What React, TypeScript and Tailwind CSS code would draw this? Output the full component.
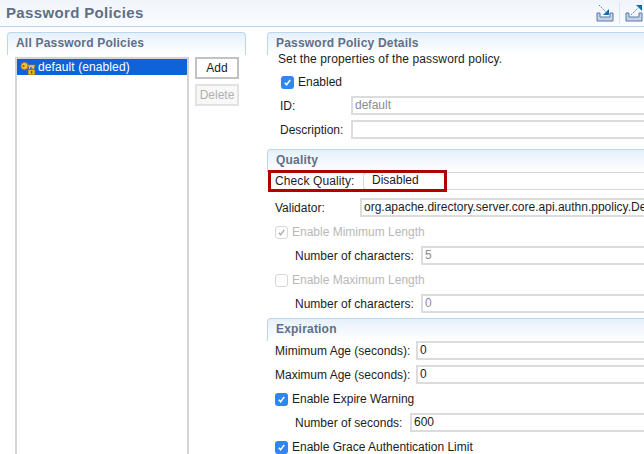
import React from 'react';

const font = { fontFamily: '"Liberation Sans", Arial, sans-serif' };

const SectionHead = ({ title }: { title: string }) => (
  <div className="h-[23px] shrink-0 pl-2 pt-[3px] rounded-t-[4px] border-t border-l border-r border-[#b9d7f0] border-b-0 bg-gradient-to-b from-[#e6f0fa] to-white text-[12px] leading-[14px] font-bold text-[#5f6f85] tracking-[0.2px]">
    {title}
  </div>
);

const Check = ({ state }: { state: 'on' | 'off' | 'dim' }) => {
  if (state === 'on') {
    return (
      <span className="w-[13px] h-[13px] rounded-[3px] bg-[#2f86f0] flex items-center justify-center shrink-0">
        <svg width="9" height="9" viewBox="0 0 9 9"><path d="M1.8 4.8 L3.6 6.8 L7.2 2" stroke="#fff" strokeWidth="1.5" fill="none" /></svg>
      </span>
    );
  }
  return (
    <span className="w-[13px] h-[13px] rounded-[3px] border border-[#d6d6d6] bg-white flex items-center justify-center shrink-0">
      {state === 'dim' && (
        <svg width="9" height="9" viewBox="0 0 9 9"><path d="M1.8 4.8 L3.6 6.8 L7.2 2" stroke="#a8a8a8" strokeWidth="1.3" fill="none" /></svg>
      )}
    </span>
  );
};

const CheckRow = ({ label, state, mt, pl = 'pl-[8px]' }: { label: string; state: 'on' | 'off' | 'dim'; mt: string; pl?: string }) => (
  <div className={`flex items-center gap-[4px] h-[14px] ${mt} ${pl} ${state === 'on' ? 'text-[#1c1c1c]' : 'text-[#b8b8b8]'}`}>
    <Check state={state} />
    <span>{label}</span>
  </div>
);

const Field = ({ label, value, labelW, mt, pl = 'pl-[8px]', dim, tall }: { label: string; value?: string; labelW: string; mt: string; pl?: string; dim?: boolean; tall?: boolean }) => (
  <div className={`flex items-center ${mt} ${pl}`}>
    <span className={`${labelW} shrink-0 text-[#1c1c1c]`}>{label}</span>
    <div className={`flex-1 ${tall ? 'h-[19px]' : 'h-[19px]'} border-2 border-[#dcdcdc] bg-white pl-[2px] leading-[14px] whitespace-nowrap overflow-hidden ${dim ? 'text-[#8c8c8c]' : 'text-[#1c1c1c]'}`}>
      {value}
    </div>
  </div>
);

const KeyIcon = () => (
  <svg width="17" height="15" viewBox="0 0 17 15" className="shrink-0">
    <circle cx="4.5" cy="6" r="3.6" fill="#f2c230" stroke="#a9791a" strokeWidth="1" />
    <circle cx="3.6" cy="6" r="1" fill="#7a5a16" />
    <path d="M8 5 H15 V7 H13.5 V8.5 H11.5 V7 H8 Z" fill="#f2c230" stroke="#a9791a" strokeWidth="0.7" />
    <path d="M9.5 9.5 V8 a2 2 0 0 1 4 0 V9.5" fill="none" stroke="#c9c9c9" strokeWidth="1.2" />
    <rect x="8" y="9.5" width="7" height="5.5" fill="#e6b628" stroke="#8a6414" strokeWidth="0.8" />
    <rect x="11" y="11" width="1.3" height="2.5" fill="#6b4c10" />
  </svg>
);

const TrayIcon = ({ out }: { out?: boolean }) => (
  <svg width="18" height="18" viewBox="0 0 18 18">
    <path d="M1 9 H4 V13 H14 V9 H17 V17 H1 Z" fill="#c3d2e6" stroke="#5c78a8" strokeWidth="1" />
    {out ? (
      <>
        <path d="M6 11 L13 4" stroke="#5c78a8" strokeWidth="1" strokeDasharray="1.5 1" />
        <path d="M11 1 H17 V7 Z" fill="#0f6cb0" />
      </>
    ) : (
      <>
        <path d="M3 1 L10 8" stroke="#5c78a8" strokeWidth="1" strokeDasharray="1.5 1" />
        <path d="M13 5 V11 H7 Z" fill="#0f6cb0" />
      </>
    )}
  </svg>
);

export default function App() {
  return (
    <div style={font} className="w-[644px] h-[454px] overflow-hidden bg-white flex flex-col text-[12px] leading-[14px]">
      <div className="h-[27px] shrink-0 flex items-center justify-between pl-[6px] border-b border-[#b9d7f0] bg-gradient-to-b from-[#f0f5fb] to-[#fafcfe]">
        <h1 className="text-[15px] font-bold text-[#5f6f85] tracking-[0.35px]">Password Policies</h1>
        <div className="flex items-center h-[25px] pr-[1px] mt-[-1px]">
          <TrayIcon />
          <div className="w-px h-[22px] bg-[#dde5ee] mx-[5px]" />
          <TrayIcon out />
        </div>
      </div>

      <div className="flex-1 flex min-h-0 pt-[5px]">
        <div className="w-[239px] ml-[7px] shrink-0 flex flex-col">
          <SectionHead title="All Password Policies" />
          <div className="flex-1 flex gap-[6px] pl-[8px] pt-[2px] min-h-0">
            <div className="w-[174px] border-2 border-[#d4d4d4] border-b-0 bg-white">
              <div className="h-[16px] bg-[#0f62d8] text-white flex items-center pl-[3px] gap-0">
                <KeyIcon />
                <span className="ml-[1px] tracking-[0.1px]">default (enabled)</span>
              </div>
            </div>
            <div className="w-[44px] flex flex-col gap-[5px]">
              <button type="button" className="h-[22px] border-2 border-[#c2c2c2] bg-white text-[#1c1c1c]">Add</button>
              <button type="button" className="h-[22px] border-2 border-[#e2e2e2] bg-[#f8f8f8] text-[#b0b0b0]">Delete</button>
            </div>
          </div>
        </div>

        <div className="flex-1 ml-[21px] min-w-0 flex flex-col -mr-[10px]">
          <SectionHead title="Password Policy Details" />
          <p className="pl-[11px] mt-[-3px] text-[#1c1c1c] tracking-[0.12px]">Set the properties of the password policy.</p>
          <CheckRow label="Enabled" state="on" mt="mt-[9px]" pl="pl-[14px]" />
          <Field label="ID:" value="default" labelW="w-[71px]" mt="mt-[7px]" pl="pl-[13px]" dim />
          <Field label="Description:" labelW="w-[71px]" mt="mt-[5px]" pl="pl-[13px]" />

          <div className="mt-[10px]"><SectionHead title="Quality" /></div>
          <div className="relative flex items-center h-[19px] pl-[8px] mt-[-1px]">
            <span className="w-[88px] shrink-0 text-[#1c1c1c] tracking-[0.1px]">Check Quality:</span>
            <div className="flex-1 h-[18px] border-b border-t border-l border-[#d8d8d8] rounded-l-[4px] pl-[8px] text-[#1c1c1c] leading-[15px]">Disabled</div>
            <div className="absolute left-[1px] top-[-1px] w-[179px] h-[22px] border-[3px] border-[#b00000] pointer-events-none" />
          </div>
          <Field label="Validator:" value="org.apache.directory.server.core.api.authn.ppolicy.DefaultPasswordValidator" labelW="w-[85px]" mt="mt-[8px]" />
          <CheckRow label="Enable Mimimum Length" state="dim" mt="mt-[8px]" />
          <Field label="Number of characters:" value="5" labelW="w-[126px]" mt="mt-[7px]" pl="pl-[28px]" dim />
          <CheckRow label="Enable Maximum Length" state="off" mt="mt-[8px]" />
          <Field label="Number of characters:" value="0" labelW="w-[126px]" mt="mt-[7px]" pl="pl-[28px]" dim />

          <div className="mt-[5px]"><SectionHead title="Expiration" /></div>
          <Field label="Mimimum Age (seconds):" value="0" labelW="w-[141px]" mt="mt-0" />
          <Field label="Maximum Age (seconds):" value="0" labelW="w-[141px]" mt="mt-[5px]" />
          <CheckRow label="Enable Expire Warning" state="on" mt="mt-[8px]" />
          <Field label="Number of seconds:" value="600" labelW="w-[115px]" mt="mt-[7px]" pl="pl-[28px]" />
          <CheckRow label="Enable Grace Authentication Limit" state="on" mt="mt-[8px]" />
        </div>
      </div>
    </div>
  );
}
